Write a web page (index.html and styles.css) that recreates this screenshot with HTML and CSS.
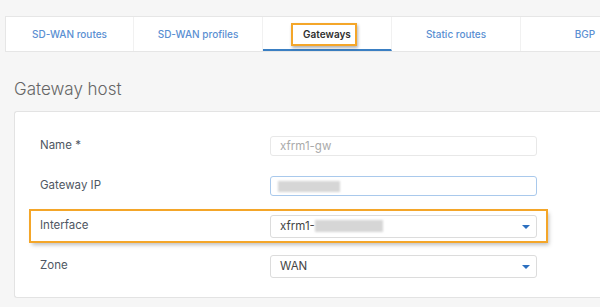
FILE: index.html
```html
<!DOCTYPE html>
<html lang="en">
<head>
<meta charset="UTF-8">
<title>Gateway host</title>
<link rel="stylesheet" href="styles.css">
</head>
<body>
<div class="tabs">
  <a class="tab">SD-WAN routes</a>
  <a class="tab">SD-WAN profiles</a>
  <a class="tab active"><span class="mark">Gateways</span></a>
  <a class="tab">Static routes</a>
  <a class="tab">BGP</a>
</div>

<h2 class="title">Gateway host</h2>

<div class="card">
  <div class="form-row">
    <label>Name *</label>
    <div class="field disabled">xfrm1-gw</div>
  </div>
  <div class="form-row">
    <label>Gateway IP</label>
    <div class="field focus"><span class="redact ip"></span></div>
  </div>
  <div class="form-row marked">
    <label>Interface</label>
    <div class="field select">xfrm1-<span class="redact iface"></span><i class="caret"></i></div>
  </div>
  <div class="form-row">
    <label>Zone</label>
    <div class="field select">WAN<i class="caret"></i></div>
  </div>
</div>
</body>
</html>
```

FILE: styles.css
```css
body{margin:0;padding:16px 0 0 5px;background:#f6f6f6;font-family:Inter,"Noto Sans",sans-serif;overflow:hidden}

/* tabs - the bar runs on past the right edge */
.tabs{display:flex;background:#fff;border:1px solid #e6e6e6;border-right:none;height:34px;overflow:hidden}
.tab{width:129px;flex:none;display:flex;align-items:center;justify-content:center;font-size:10px;font-weight:500;color:#5a8fd2;border-right:1px solid #f1f1f1;box-sizing:border-box}
.tab:first-child{width:128px}
.tab.active{border-bottom:2px solid #3a7fc3;color:#2f2f2f;font-weight:600;padding-top:2px}
.mark{border:2px solid #f4a629;padding:3px 4px 4px 10px;box-shadow:1px 2px 3px rgba(0,0,0,.3);margin-left:-6px}

.title{font-size:17px;font-weight:300;color:#666;margin:24px 0 0 9px;line-height:26px;height:35px}

/* card */
.card{background:#fff;border:1px solid #e3e3e3;border-right:none;border-radius:3px 0 0 3px;margin-left:9px;padding:19px 14px 16px;display:flex;flex-direction:column;gap:10px}
.form-row{display:flex;align-items:center;height:30px;margin-left:2px;padding:0 9px;width:515px;box-sizing:border-box}
.form-row.marked{box-shadow:0 0 0 2px #f4a629,2px 3px 4px 1px rgba(0,0,0,.25)}
label{width:230px;flex:none;font-size:11.5px;color:#4f5763;margin-top:-2px}

.field{width:267px;height:20px;box-sizing:border-box;border:1px solid #e8e8e8;border-radius:3px;font-size:11.5px;color:#555;padding:0 9px;display:flex;align-items:center;position:relative}
.field.disabled{color:#aaa}
.field.focus{border-color:#a9c9ec;padding-left:7px}
.field.select{height:23px;border-color:#dcdcdc;color:#444}
.caret{position:absolute;right:6px;top:9px;border-left:4px solid transparent;border-right:4px solid transparent;border-top:4px solid #2b6fbf}
.redact{display:inline-block;background:#d6d6d6;filter:blur(1px)}
.redact.ip{width:62px;height:11px}
.redact.iface{width:68px;height:12px}
```
